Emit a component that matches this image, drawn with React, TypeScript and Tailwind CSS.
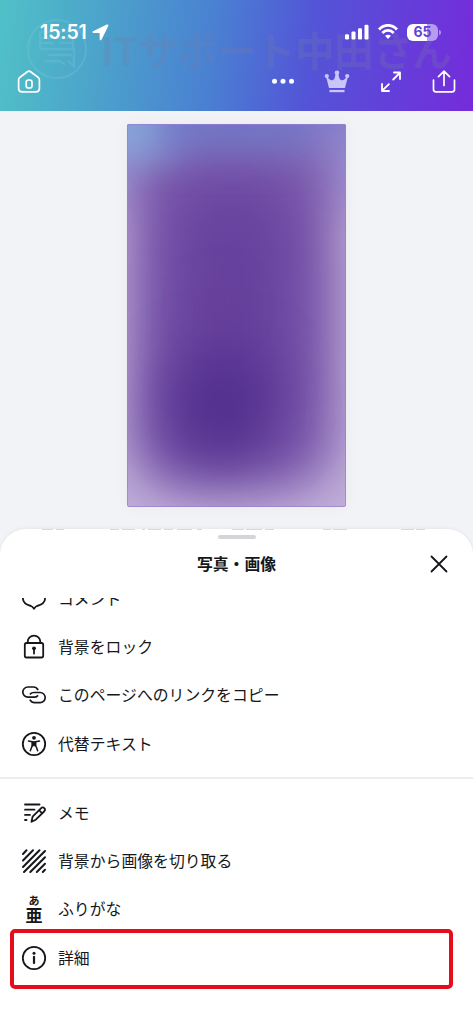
import type { ReactNode } from 'react';

const strokeProps = {
  fill: 'none',
  stroke: 'currentColor',
  strokeWidth: 1.8,
  strokeLinecap: 'round' as const,
  strokeLinejoin: 'round' as const,
};

function Icon({ children }: { children: ReactNode }) {
  return (
    <svg className="block size-6 shrink-0 overflow-visible" viewBox="0 0 24 24" {...strokeProps}>
      {children}
    </svg>
  );
}

function Row({ icon, label }: { icon: ReactNode; label: string }) {
  return (
    <li className="flex h-[48.6px] items-center gap-[12px] pl-[22px] first:pt-[2px]">
      {icon}
      <span className="whitespace-nowrap text-[15.85px] leading-6">{label}</span>
    </li>
  );
}

function StatusBar() {
  return (
    <div className="flex h-[64px] items-center justify-between pl-[40px] pr-[32px] text-white">
      <div className="flex items-center gap-[5px]">
        <span className="font-[Inter] text-[19.5px] font-semibold leading-6 tracking-[-0.1px]">15:51</span>
        <svg className="size-[17px]" viewBox="0 0 17 17" fill="currentColor">
          <path d="M14.8.6 1 7.2c-1.100.6-.8 1.700.4 1.700l6.200.1.1 6.200c0 1.300 1.200 1.600 1.800.5L16.300 2C16.800.8 16 .1 14.800.6Z" />
        </svg>
      </div>
      <div className="flex items-center gap-[9px]">
        <svg className="h-4 w-6" viewBox="0 0 24 16" fill="currentColor">
          <rect x="0" y="10.2" width="4" height="5.3" rx="1.2" />
          <rect x="6.5" y="7.4" width="4" height="8.1" rx="1.2" />
          <rect x="13" y="4.2" width="4" height="11.3" rx="1.2" />
          <rect x="19.5" y="0.8" width="4" height="14.7" rx="1.2" />
        </svg>
        <svg className="h-4 w-5" viewBox="0 0 20 16" fill="none" stroke="currentColor" strokeWidth="2.7">
          <path d="M1 5.5C6-.1 14-.1 19 5.5M4.300 9C7.600 5.500 12.400 5.500 15.700 9" />
          <path d="m7 11.800 3 3.300 3-3.300c-1.700-1.500-4.300-1.500-6 0Z" fill="currentColor" stroke="none" />
        </svg>
        <div className="flex items-center gap-px">
          <div className="flex h-[17px] w-[31px] items-center justify-center rounded-[6px] bg-[linear-gradient(90deg,#fff_65%,#b69cee_65%)] font-[Inter] text-[14px] font-bold leading-none text-[#6841d3]">
            65
          </div>
          <div className="h-[5px] w-[2px] rounded-r-full bg-[#ae8fe9]" />
        </div>
      </div>
    </div>
  );
}

function Watermark() {
  return (
    <div className="pointer-events-none absolute left-[26px] top-[19px] flex h-[60px] items-center">
      <svg className="size-[62px] text-[#7bc6d7]/30" viewBox="0 0 62 62" fill="none" stroke="currentColor">
        <circle cx="31" cy="31" r="29" strokeWidth="2" />
        <path d="M14 13v18M14 14h15M14 20h14M14 25h14M33 14h15M33 20h15M33 25h15M14 31h34v17l-6-5M22 37h24M18 43h15l6 3M47 13v18" strokeWidth="2.3" />
      </svg>
      <span className="ml-[13px] whitespace-nowrap text-[39.5px] font-bold leading-[60px] tracking-[-0.3px] text-[#777ba8]/25">
        ITサポート中田さん
      </span>
    </div>
  );
}

function TopBar() {
  return (
    <header className="relative h-[111px] bg-[linear-gradient(97deg,#50c1c7_0%,#4ca2cb_22%,#4a80d2_45%,#5355d7_65%,#6340d9_82%,#752bdb_100%)]">
      <Watermark />
      <div className="relative">
        <StatusBar />
        <div className="flex h-[36px] items-center pl-[17px] pr-[17px] text-white">
          <svg className="size-6" viewBox="0 0 24 24" {...strokeProps} strokeWidth="1.7">
            <path d="M10.400 1.800 3 7.200C2 7.900 1.600 8.700 1.600 9.800v8.700c0 2.300 1.100 3.300 3.300 3.300h14.200c2.200 0 3.300-1 3.300-3.300V9.800c0-1.100-.4-1.900-1.400-2.600l-7.400-5.400c-1.100-.8-2.100-.8-3.200 0Z" />
            <rect x="9.2" y="10" width="5.8" height="8" rx="2.3" />
          </svg>
          <div className="ml-auto flex items-center">
            <svg className="h-6 w-6" viewBox="0 0 24 24" fill="currentColor">
              <circle cx="3.5" cy="11.3" r="2.5" />
              <circle cx="12" cy="11.3" r="2.5" />
              <circle cx="20.5" cy="11.3" r="2.5" />
            </svg>
            <svg className="ml-[29px] h-6 w-[26px] text-[#c9c6fb]" viewBox="0 0 26 24" fill="currentColor">
              <path d="M5 18 2.300 7.500l1.100-.5c2 3.500 5.600 4.500 7.200 1.200L11.700 4h2.600l1.100 4.200c1.600 3.300 5.200 2.300 7.200-1.200l1.100.5L21 18Z" />
              <circle cx="13" cy="2.7" r="2.3" />
              <circle cx="2.8" cy="6.1" r="2.1" />
              <circle cx="23.2" cy="6.1" r="2.1" />
              <path d="M5.500 19.900h15v2.300h-15z" />
            </svg>
            <svg className="ml-[29px] size-6" viewBox="0 0 24 24" {...strokeProps}>
              <path d="M15 2.500h6V9M20.700 3l-6.500 6.500M3 14v7h7M3.300 20.700l6.600-6.600" />
            </svg>
            <svg className="ml-[29px] h-6 w-6" viewBox="0 0 24 24" {...strokeProps} strokeWidth="1.7">
              <path d="M1.500 10v9.500c0 1.500.8 2.300 2.300 2.300h16.400c1.500 0 2.300-.8 2.300-2.300V10M12 15.500V1.500M6.500 6.700 12 1.200l5.500 5.500" />
            </svg>
          </div>
        </div>
      </div>
    </header>
  );
}

function PagePreview() {
  return (
    <div className="flex h-[418px] items-start justify-center bg-[#f2f3f6] pt-[13px]">
      <div className="relative h-[383px] w-[219px] overflow-hidden rounded-[2px] bg-[#c2b0da] shadow-[0_0_14px_rgba(65,70,100,0.05)]">
        <div className="absolute inset-x-0 top-0 h-[110px] bg-[linear-gradient(180deg,#8a83d0,transparent)]" />
        <div className="absolute left-[5px] top-[10px] h-[356px] w-[203px] rounded-[50px] bg-[#7a58ab] blur-[25px]" />
        <div className="absolute left-[45px] top-[55px] h-[260px] w-[120px] rounded-[60px] bg-[#60399a]/75 blur-[30px]" />
        <div className="absolute left-[38px] top-[230px] h-[115px] w-[110px] rounded-full bg-[#482787]/75 blur-[30px]" />
        <div className="absolute left-[72px] top-[157px] h-[50px] w-[38px] rounded-full bg-[#713690]/25 blur-[18px]" />
        <div className="absolute -left-[25px] -top-[30px] h-[65px] w-[75px] rounded-full bg-[#88b4e0]/85 blur-[20px]" />
        <div className="absolute left-[25px] -top-[24px] h-[50px] w-[165px] rounded-full bg-[#6a76c5]/80 blur-[20px]" />
        <div className="absolute inset-0 rounded-[2px] border border-[#9a7dce]/70" />
      </div>
    </div>
  );
}

const firstGroup = [
  {
    label: 'コメント',
    icon: <Icon><path d="M9 19C3.700 17.800.8 14.500.8 10.500.8 5.100 5 1.500 12 1.500s11.200 3.600 11.200 9c0 4-2.900 7.300-8.200 8.500-1.200.3-1.800 1-3 2.700-1.200-1.700-1.800-2.400-3-2.700Z" /></Icon>,
  },
  {
    label: '背景をロック',
    icon: (
      <Icon>
        <rect x="2.8" y="8" width="18.4" height="14.5" rx="1.8" />
        <path d="M5.700 7.800V6.900a6.300 6.300 0 0 1 12.600 0v.9M12 14v4.500" />
        <circle cx="12" cy="13.3" r="1.9" fill="currentColor" stroke="none" />
      </Icon>
    ),
  },
  {
    label: 'このページへのリンクをコピー',
    icon: <Icon><path d="M15.800 6.500C14.900 4.900 13.500 4 11.500 4H5.900a5.100 5.100 0 0 0 0 10.200h6.300c1.500 0 2.500-.4 3.400-1.300M8.200 17.200c.9 1.600 2.300 2.500 4.300 2.500h5.600a5.100 5.100 0 0 0 0-10.200h-6.300c-1.500 0-2.500.4-3.400 1.300" strokeWidth="1.7" /></Icon>,
  },
  {
    label: '代替テキスト',
    icon: (
      <Icon>
        <circle cx="12" cy="12" r="11.2" />
        <circle cx="12" cy="5.8" r="1.9" fill="currentColor" stroke="none" />
        <path d="M6.500 9.100 10.300 9.700v3.800L8.300 18.800M17.500 9.100l-3.800.6v3.800l2 5.300" strokeWidth="1.5" />
        <path d="M10.500 9.700h3v4.500L12 13.500l-1.500.7Z" fill="currentColor" strokeWidth="1" />
      </Icon>
    ),
  },
];

const secondGroup = [
  {
    label: 'メモ',
    icon: (
      <Icon>
        <path d="M3 3.500h14.500M3 8.700h9.500M3 13.900h5M3 19h1.500" />
        <path d="m9.500 20.800 1.100-5.200 8.300-8.300c2.400-2.300 5.500.8 3.200 3.200L13.800 18.700ZM17 9.200l3.200 3.200" />
      </Icon>
    ),
  },
  {
    label: '背景から画像を切り取る',
    icon: <Icon><path d="M1 5 4.500 1.300M1 11.500 11 1.300M1 18 17.500 1.300M2 23 23 2M8.300 23 23 8.300M14.800 23l8.200-8.200M20.800 23l2.200-2.200" strokeWidth="2" /></Icon>,
  },
  {
    label: 'ふりがな',
    icon: (
      <span className="flex h-[31px] w-6 shrink-0 flex-col items-center">
        <span className="text-[11px] font-bold leading-[12px]">あ</span>
        <span className="text-[17px] font-bold leading-[17px]">亜</span>
      </span>
    ),
  },
];

function BottomSheet() {
  return (
    <section className="relative h-[495px] overflow-hidden rounded-t-[26px] bg-white shadow-[0_-1px_3px_rgba(30,30,50,0.06)]">
      <svg className="absolute left-0 top-0 h-[2px] w-full" viewBox="0 0 473 2" stroke="#babac0" strokeOpacity=".55">
        <path d="M42 .5h11m3 0h8M110 .5h9m3 0h13m7 0h3m3 0h13m3 0h9m4 0h15m5 0h5M232 .5h12m2 0h16m3 0h9M323 .5h8m2 0h14M401 .5h13m2 0h9" />
      </svg>
      <div className="flex h-[69px] flex-col">
        <div className="mx-auto mt-[6px] h-[4px] w-[38px] shrink-0 rounded-full bg-[#d5d5d8]" />
        <div className="grid h-[50px] grid-cols-[1fr_auto_1fr] items-center">
          <span />
          <h1 className="text-[15.85px] font-bold leading-6">写真・画像</h1>
          <button className="mr-[25px] justify-self-end" aria-label="閉じる">
            <svg className="size-[18px]" viewBox="0 0 18 18" {...strokeProps}>
              <path d="m1.500 1.500 15 15m0-15-15 15" />
            </svg>
          </button>
        </div>
      </div>
      <div className="h-[426px] overflow-hidden">
        <ul className="-mt-[24px]">
          {firstGroup.map((item) => <Row key={item.label} {...item} />)}
        </ul>
        <div className="mt-[8.6px] h-[2px] bg-[#ededef]" />
        <ul className="mt-[9px]">
          {secondGroup.map((item) => <Row key={item.label} {...item} />)}
        </ul>
        <ul className="-mt-[4.5px] ml-[9.5px] flex h-[60px] w-[443px] items-center rounded-[5px] border-4 border-[#e60d1b]">
          <li className="flex items-center gap-[12px] pb-[2px] pl-[8.5px]">
            <Icon>
              <circle cx="12" cy="12" r="11.2" />
              <path d="M12 10.800v6.300" strokeWidth="2.2" />
              <circle cx="12" cy="7.2" r="1.5" fill="currentColor" stroke="none" />
            </Icon>
            <span className="text-[15.85px] leading-6">詳細</span>
          </li>
        </ul>
      </div>
    </section>
  );
}

export default function App() {
  return (
    <main className="h-[1024px] w-[473px] overflow-hidden bg-[#f2f3f6] font-['Noto_Sans_CJK_JP',sans-serif] text-[#16171b]">
      <TopBar />
      <PagePreview />
      <BottomSheet />
    </main>
  );
}
